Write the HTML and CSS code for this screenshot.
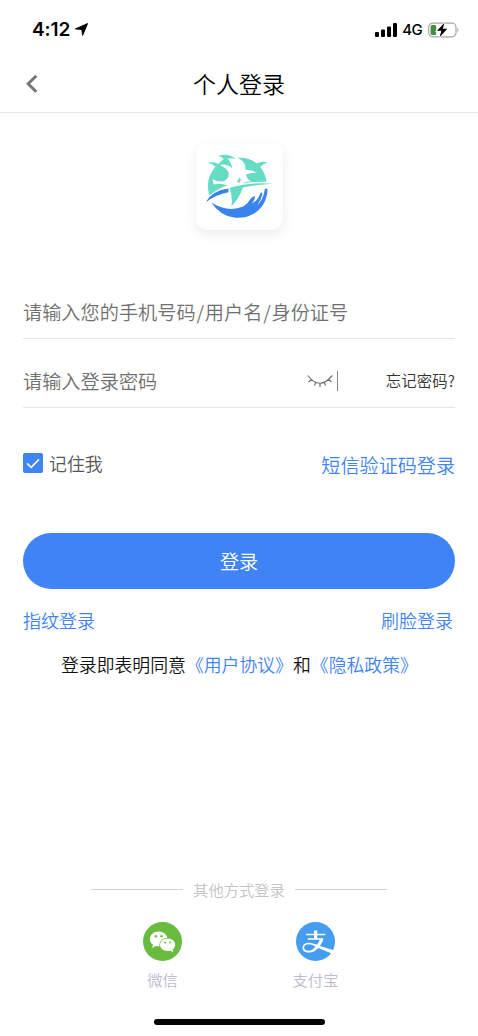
FILE: index.html
```html
<!DOCTYPE html>
<html lang="zh-CN">
<head>
<meta charset="utf-8">
<title>个人登录</title>
<link rel="stylesheet" href="styles.css">
</head>
<body>
<div class="screen">
  <div class="status">
    <div class="status-left">
      <span class="time">4:12</span>
      <svg class="locate" viewBox="0 0 13 13"><path d="M12.600.500 7.600 12.400 6.800 6.600.400 5.900z" stroke="#000" stroke-width=".9" stroke-linejoin="round"/></svg>
    </div>
    <div class="status-right">
      <svg class="signal" viewBox="0 0 22 14"><rect y="9" width="4" height="5" rx="1.1"/><rect x="6" y="6.5" width="4" height="7.500" rx="1.100"/><rect x="12" y="3.500" width="4" height="10.500" rx="1.100"/><rect x="18" width="4" height="14" rx="1.100"/></svg>
      <span class="network">4G</span>
      <svg class="battery" viewBox="0 0 32 16"><rect x=".7" y="1.200" width="27.300" height="13.600" rx="4" fill="none" stroke="#a5a5a5" stroke-width="1.200"/><rect x="2.600" y="3" width="5.600" height="10" rx="1.500" fill="#3f9142"/><path d="M29.500 5.500q2 2.500 0 5z" fill="#a5a5a5"/><path d="M16.500.8 9 8.800h4.400L11.600 15.200 19.300 6.800h-4.500z" stroke="#fff" stroke-width="1.800" paint-order="stroke"/></svg>
    </div>
  </div>
  <header class="nav">
    <svg class="back" viewBox="0 0 12 20"><path d="M10.300 1.700 2.200 9.800l8.100 8.100" fill="none" stroke="#777" stroke-width="3"/></svg>
    <h1 class="title">个人登录</h1>
  </header>
  <main class="content">
    <div class="logo">
      <svg viewBox="-18 -20 260 260">
        <g fill="#66dcc4">
          <path d="M16 40Q36 34 52 45L63 51Q82 62 80 78Q77 90 62 95Q46 96 31 88L35 104Q56 98 76 106Q44 118 22 137Q8 88 40 51Q30 41 16 40z"/>
          <path d="M48 19Q78 9 100 27Q86 24 76 27Q87 37 90 55Q80 45 62 44L46 47Q54 36 65 28Q58 21 48 19z"/>
          <path d="M106 24Q140 22 164 41Q178 32 196 39Q183 42 174 52Q189 70 193 96Q150 94 120 102L134 96Q144 94 148 97Q132 86 132 74Q146 67 164 69Q148 58 129 60Q133 36 106 24z"/>
          <path d="M82 114Q146 95 213 102Q168 104 122 113Q112 145 88 169Q92 140 82 114z"/>
          <path d="M104 97L111 84 117 90 111 99z"/>
        </g>
        <path d="M11 157Q30 122 79 116L79 127Q42 134 11 157zM28 158Q76 189 123 170Q137 162 144 148Q151 138 159 139Q158 151 149 161Q167 152 174 131Q178 125 181 132Q177 151 164 166Q183 152 188 117H196Q194 166 157 190Q129 207 96 203Q53 197 28 158z" fill="#3983ec"/>
      </svg>
    </div>
    <div class="field"><span>请输入您的手机号码<i>/</i>用户名<i>/</i>身份证号</span></div>
    <div class="field field-password">
      <span class="placeholder">请输入登录密码</span>
      <svg class="eye" viewBox="0 0 26 14"><path d="M.8 1.500q12 15.500 24.500 0M4.300 5.300 1.700 8M8.900 8.300 7.400 11.500M13 9v4M17.100 8.300l1.500 3.200M21.700 5.300 24.300 8" fill="none" stroke="#707070" stroke-width="1.200"/></svg>
      <span class="divider"></span>
      <a class="forgot">忘记密码?</a>
    </div>
    <div class="options">
      <label class="remember"><span class="checkbox"><svg viewBox="0 0 20 20"><path d="m4 10.300 4.200 4L16 6.400" fill="none" stroke="#fff" stroke-width="1.600"/></svg></span>记住我</label>
      <a class="sms">短信验证码登录</a>
    </div>
    <div class="submit">登录</div>
    <div class="biometrics"><a>指纹登录</a><a>刷脸登录</a></div>
    <p class="agreement">登录即表明同意<a>《用户协议》</a>和<a>《隐私政策》</a></p>
  </main>
  <footer class="other">
    <div class="other-title">其他方式登录</div>
    <div class="providers">
      <div class="provider">
        <svg viewBox="0 0 39 39"><circle cx="19.500" cy="19.500" r="19.500" fill="#68bb3c"/><path d="M15.500 9.500C10.600 9.500 6.900 12.800 6.900 16.900c0 2.400 1.200 4.500 3.100 5.800L9.200 26l3.500-2q1.500.4 3.200.3C24 24.200 24.500 20 24.500 16.900 24.500 12.800 20.500 9.500 15.500 9.500z" fill="#fff"/><path d="M24.700 16.500c4.300 0 7.500 2.800 7.500 6.300 0 2-1 3.700-2.600 4.900l.6 2.500-2.700-1.500q-1.300.4-2.800.4c-4.300 0-7.600-2.800-7.600-6.300s3.300-6.300 7.600-6.300z" fill="#fff" stroke="#68bb3c" stroke-width="1.500" paint-order="stroke"/><g fill="#68bb3c"><circle cx="12.800" cy="14.300" r="1.200"/><circle cx="18.500" cy="14.300" r="1.200"/><circle cx="22.200" cy="20.600" r="1"/><circle cx="27.200" cy="20.600" r="1"/></g></svg>
        <span>微信</span>
      </div>
      <div class="provider">
        <svg viewBox="0 0 39 39"><circle cx="19.500" cy="19.500" r="19.500" fill="#459df1"/><path d="M18 8.600h3.200v3.200h8v1.500h-8v2.900h6.400q-.9 4.300-3.700 7.800l13.800 4.300-2 3.300-13.400-5.600q-4.200 4.600-9.300 4.600c-4.500 0-6.500-2.300-6.500-4.900 0-2.800 2.500-5 6.200-5 3 0 5.500 1 8.400 2.100q1.800-2.300 2.600-5.100H11.700v-1.500H18v-2.900h-7.800v-1.500H18zM19.500 24.500q-3.800-2.200-7-2.200c-2.800 0-4.400 1.400-4.400 3.200 0 2 1.800 3.200 4.700 3.200q3.600 0 6.700-4.200z" fill="#fff" fill-rule="evenodd"/></svg>
        <span>支付宝</span>
      </div>
    </div>
    <div class="home-bar"></div>
  </footer>
</div>
</body>
</html>
```
FILE: styles.css
```css
* { box-sizing: border-box; }
body { margin: 0; background: #fff; font-family: "Noto Sans CJK SC", sans-serif; font-weight: 350; color: #111; }
svg { display: block; }
a { color: #3f83f7; }
i { font-style: normal; padding: 0 .8px; }
.screen { width: 478px; height: 1036px; display: flex; flex-direction: column; overflow: hidden; }
.status { height: 56px; padding: 4px 18px 0 32px; display: flex; align-items: center; justify-content: space-between; font-family: Inter, sans-serif; color: #000; }
.status-left, .status-right { display: flex; align-items: center; }
.time { font-size: 19px; font-weight: 600; line-height: 24px; letter-spacing: -.1px; }
.locate { width: 13px; height: 13px; margin: 0 0 2px 5px; }
.signal { width: 22px; height: 14px; }
.network { font-size: 15px; line-height: 20px; margin: 0 6px 0 5.500px; font-weight: 500; letter-spacing: -.6px; }
.battery { width: 32px; height: 16px; }
.nav { height: 57px; padding: 0 26px; border-bottom: 1px solid #e5e5e5; display: grid; grid-template-columns: 12px 1fr 12px; align-items: center; }
.back { width: 12px; height: 20px; }
.title { margin: 0; padding-bottom: 2px; text-align: center; font-size: 23px; font-weight: 350; line-height: 32px; color: #000; }
.content { padding: 30px 23px 0; flex: 1; }
.logo { width: 87px; height: 87px; margin: 0 auto; border-radius: 12px; background: #fff; box-shadow: 0 4px 12px rgba(0, 0, 0, .08); }
.logo svg { width: 87px; height: 87px; }
.field { height: 55px; margin-top: 54px; padding-top: 2px; display: flex; align-items: center; border-bottom: 1px solid #e5e5ed; font-size: 19.200px; color: #707070; }
.field-password { height: 69px; margin-top: 0; padding-top: 15px; }
.placeholder { flex: 1; }
.eye { width: 26px; height: 14px; }
.divider { width: 1px; height: 20px; background: #888; margin: 0 48px 0 4px; }
.forgot { font-size: 15.400px; letter-spacing: .1px; line-height: 22px; padding-bottom: 2px; color: #333; }
.options { height: 56px; margin-top: 27px; display: flex; justify-content: space-between; }
.remember { height: 56px; display: flex; align-items: center; gap: 6px; font-size: 17.900px; color: #555; }
.checkbox { width: 20px; height: 20px; border-radius: 2px; background: #3f83f7; }
.sms { font-size: 19.100px; line-height: 60px; }
.submit { height: 56px; margin-top: 42px; border-radius: 28px; background: #3f83f7; color: #fff; font-size: 19.100px; line-height: 57px; text-align: center; }
.biometrics { display: flex; justify-content: space-between; padding-right: 2px; margin-top: 16px; font-size: 18px; line-height: 30px; }
.agreement { margin: 14px 0 0 38px; font-size: 17.850px; line-height: 30px; white-space: nowrap; }
.other { height: 162px; display: flex; flex-direction: column; align-items: center; }
.other-title { width: 296px; height: 30px; display: flex; align-items: center; gap: 10px; font-size: 15.300px; line-height: 28px; color: #c4c4c4; }
.other-title::before, .other-title::after { content: ""; flex: 1; height: 1px; background: #d4d4d4; }
.providers { display: flex; gap: 107px; margin-top: 18px; }
.provider { width: 46px; display: flex; flex-direction: column; align-items: center; gap: 6px; font-size: 15.300px; line-height: 24px; color: #bcbccf; }
.provider svg { width: 39px; height: 39px; }
.home-bar { width: 171px; height: 6px; border-radius: 3px; background: #000; margin-top: 28px; }
```
